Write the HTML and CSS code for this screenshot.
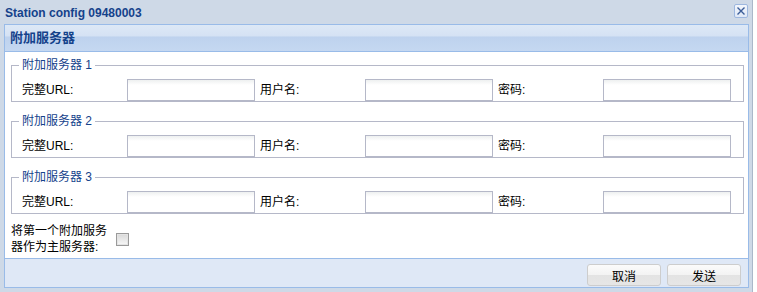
FILE: index.html
```html
<!DOCTYPE html>
<html lang="zh">
<head>
  <meta charset="UTF-8">
  <title>Station config 09480003</title>
  <link rel="stylesheet" href="styles.css">
</head>
<body>
  <div class="window">
    <div class="win-header">
      <span class="win-title">Station config 09480003</span>
      <span class="win-close">
        <svg width="12" height="12" viewBox="0 0 12 12">
          <path d="M2.5 2.5 L9.5 9.5 M9.5 2.5 L2.5 9.5" stroke="#3b5d98" stroke-width="1.4" fill="none"/>
        </svg>
      </span>
    </div>

    <div class="panel">
      <div class="panel-header">附加服务器</div>

      <div class="panel-body">
        <fieldset class="server">
          <legend>附加服务器 1</legend>
          <div class="row">
            <label class="field-label">完整URL:</label>
            <input class="text-field" type="text">
            <label class="field-label">用户名:</label>
            <input class="text-field" type="text">
            <label class="field-label">密码:</label>
            <input class="text-field" type="password">
          </div>
        </fieldset>

        <fieldset class="server">
          <legend>附加服务器 2</legend>
          <div class="row">
            <label class="field-label">完整URL:</label>
            <input class="text-field" type="text">
            <label class="field-label">用户名:</label>
            <input class="text-field" type="text">
            <label class="field-label">密码:</label>
            <input class="text-field" type="password">
          </div>
        </fieldset>

        <fieldset class="server">
          <legend>附加服务器 3</legend>
          <div class="row">
            <label class="field-label">完整URL:</label>
            <input class="text-field" type="text">
            <label class="field-label">用户名:</label>
            <input class="text-field" type="text">
            <label class="field-label">密码:</label>
            <input class="text-field" type="password">
          </div>
        </fieldset>

        <div class="check-row">
          <label class="check-label" for="primary">将第一个附加服务器作为主服务器:</label>
          <input class="check" type="checkbox" id="primary">
        </div>
      </div>

      <div class="panel-footer">
        <button class="btn">取消</button>
        <button class="btn">发送</button>
      </div>
    </div>
  </div>
</body>
</html>
```

FILE: styles.css
```css
* {
  box-sizing: border-box;
  margin: 0;
  padding: 0;
}
body {
  background-color: #fff;
  font-family: "Liberation Sans", "Noto Sans CJK SC", sans-serif;
  font-size: 12px;
  color: #000;
}
.window {
  width: 753px;
  height: 292px;
  background-color: #ceD9e7;
  border-right: 1px solid #aab8ca;
  overflow: hidden;
}
.win-header {
  height: 24px;
  display: flex;
  align-items: center;
  justify-content: space-between;
  padding: 0 4px 0 5px;
}
.win-title {
  font-size: 12px;
  font-weight: bold;
  color: #15428b;
  line-height: 14px;
  padding-top: 1px;
}
.win-close {
  width: 14px;
  height: 14px;
  margin-top: -2px;
  border: 1px solid #9db7df;
  border-radius: 2px;
  background: linear-gradient(#f2f6fc, #dfe8f6);
  display: flex;
  align-items: center;
  justify-content: center;
}
.panel {
  margin: 0 3px 0 4px;
  border: 1px solid #99bbe8;
}
.panel-header {
  height: 27px;
  border-bottom: 1px solid #99bbe8;
  background: linear-gradient(#dde8f6 0, #d5e2f4 42%, #bed2ee 46%, #c5d8f1 100%);
  padding-left: 5px;
  font-size: 13px;
  font-weight: bold;
  color: #15428b;
  line-height: 26px;
}
.panel-body {
  height: 207px;
  background-color: #fff;
  border-bottom: 1px solid #99bbe8;
  padding: 6px 6px 0 6px;
}
.server {
  border: 1px solid #b5b8c8;
  padding: 7px 7px 0 7px;
  margin-bottom: 12px;
}
.server:last-of-type {
  margin-bottom: 9px;
}
.server legend {
  padding: 0 3px;
  font-size: 12px;
  line-height: 14px;
  color: #15428b;
}
.row {
  display: flex;
  align-items: center;
  padding-left: 3px;
}
.field-label {
  width: 105px;
  line-height: 22px;
}
.text-field {
  width: 128px;
  height: 22px;
  margin-right: 5px;
  border: 1px solid #b5b8c8;
  background: linear-gradient(#eef0f0, #fff 5px);
  outline: none;
}
.check-row {
  display: flex;
  align-items: center;
}
.check-label {
  width: 105px;
  line-height: 16px;
}
.check {
  appearance: none;
  width: 13px;
  height: 13px;
  margin-top: 1px;
  border: 1px solid #9a9a9a;
  background: linear-gradient(#d8d8d8, #f8f8f8);
  box-shadow: inset 0 0 0 1px #e4e4e4;
}
.panel-footer {
  height: 28px;
  background-color: #dfe8f6;
  display: flex;
  justify-content: flex-end;
  gap: 6px;
  padding: 5px 7px 0 0;
}
.btn {
  width: 74px;
  height: 22px;
  border: 1px solid #cdcdcd;
  border-radius: 3px;
  background: linear-gradient(#fbfbfb 0, #f3f3f3 48%, #e3e3e3 52%, #e6e6e6 100%);
  font-family: "Liberation Sans", "Noto Sans CJK SC", sans-serif;
  font-size: 12px;
  color: #000;
}
```
